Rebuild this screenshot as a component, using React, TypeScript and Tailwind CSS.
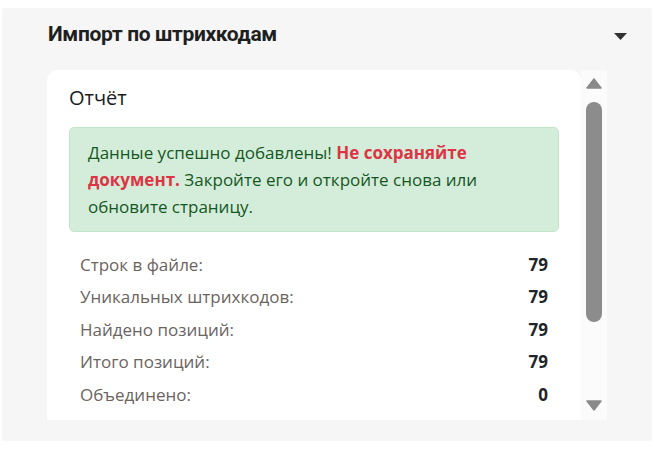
const STATS: [string, number][] = [
  ["Строк в файле:", 79],
  ["Уникальных штрихкодов:", 79],
  ["Найдено позиций:", 79],
  ["Итого позиций:", 79],
  ["Объединено:", 0],
];

function FakeScrollbar() {
  return (
    <div className="w-[26px] shrink-0 bg-[#fbfbfb] flex flex-col items-center pt-[8px] pb-[9px]">
      {/* up arrow */}
      <svg width="16" height="11" viewBox="0 0 16 11">
        <path d="M8 1 L15 10 L1 10 Z" fill="#8a8a8a" stroke="#8a8a8a" strokeWidth="1.5" strokeLinejoin="round" />
      </svg>
      <div className="mt-[13px] w-[16px] h-[220px] rounded-full bg-[#8c8c8c]" />
      <div className="flex-1" />
      <svg width="16" height="11" viewBox="0 0 16 11">
        <path d="M1 1 L15 1 L8 10 Z" fill="#8a8a8a" stroke="#8a8a8a" strokeWidth="1.5" strokeLinejoin="round" />
      </svg>
    </div>
  );
}

export default function App() {
  return (
    <div className="w-[654px] h-[451px] bg-white pt-[8px] px-[2px]">
      <div className="h-[433px] bg-[#f6f6f6] rounded-[3px] pl-[46px] pr-[26px]">
        <div className="h-[62px] flex items-center justify-between pb-[8px]">
          <h2 className="text-[21px] font-bold text-[#1f1f1f] tracking-[-0.35px] font-['Roboto',sans-serif]">
            Импорт по штрихкодам
          </h2>
          <svg width="13" height="7" viewBox="0 0 13 7" className="mr-[-1px] mt-[2px]">
            <path d="M0 0 L13 0 L6.5 7 Z" fill="#333" />
          </svg>
        </div>

        <div className="flex h-[350px] w-[560px] -ml-[1px]">
          <div className="flex-1 bg-white rounded-tl-[10px] rounded-tr-[10px] overflow-hidden font-['Open_Sans',sans-serif]">
            <div className="pl-[22px] pr-[22px] pt-[14px]">
              <div className="text-[20px] font-medium text-[#1a1d20] leading-[28px]">Отчёт</div>
              <div className="mt-[15px] bg-[#d4edda] border border-[#c3e6cb] rounded-[5px] px-[18px] py-[11px] text-[17px] leading-[27px] text-[#155724]">
                Данные успешно добавлены!{" "}
                <span className="font-bold text-[#dc3545]">Не сохраняйте документ.</span> Закройте его и откройте снова
                или обновите страницу.
              </div>
              <div className="mt-[16px] px-[11px]">
                {STATS.map(([label, value]) => (
                  <div key={label} className="flex justify-between items-center h-[32.5px] text-[17px]">
                    <span className="text-[#6b6461]">{label}</span>
                    <span className="font-bold text-[#212529]">{value}</span>
                  </div>
                ))}
              </div>
            </div>
          </div>
          <FakeScrollbar />
        </div>
      </div>
    </div>
  );
}
